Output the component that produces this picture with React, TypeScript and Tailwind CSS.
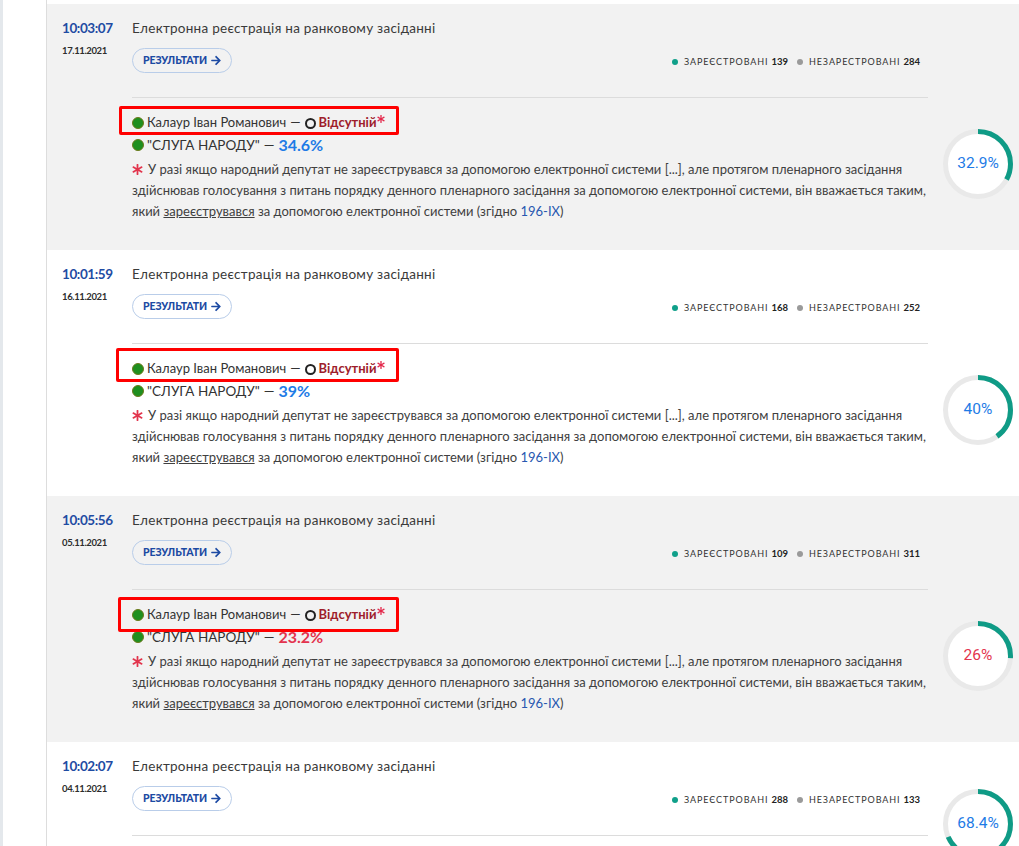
import React from "react";

interface Reg {
  time: string;
  date: string;
  reg: number;
  unreg: number;
  party: string;
  partyColor: "blue" | "red";
  circle: string;
  pct: number;
  box: { top: number; left: number; width: number; height: number };
  gray: boolean;
  circleTop: number;
}

const rows: Reg[] = [
  { time: "10:03:07", date: "17.11.2021", reg: 139, unreg: 284, party: "34.6%", partyColor: "blue", circle: "32.9%", pct: 32.9, box: { top: -6, left: -13, width: 280, height: 29 }, gray: true, circleTop: 125 },
  { time: "10:01:59", date: "16.11.2021", reg: 168, unreg: 252, party: "39%", partyColor: "blue", circle: "40%", pct: 40, box: { top: -10, left: -16, width: 283, height: 34 }, gray: false, circleTop: 125 },
  { time: "10:05:56", date: "05.11.2021", reg: 109, unreg: 311, party: "23.2%", partyColor: "red", circle: "26%", pct: 26, box: { top: -7, left: -14, width: 281, height: 35 }, gray: true, circleTop: 125 },
  { time: "10:02:07", date: "04.11.2021", reg: 288, unreg: 133, party: "", partyColor: "blue", circle: "68.4%", pct: 68.4, box: { top: 0, left: 0, width: 0, height: 0 }, gray: false, circleTop: 47 },
];

function ArrowIcon() {
  return (
    <svg viewBox="0 0 448 512" className="w-[10px] h-[11px] fill-current">
      <path d="M190.5 66.9l22.2-22.2c9.4-9.4 24.6-9.4 33.9 0L441 239c9.4 9.4 9.4 24.6 0 33.9L246.6 467.3c-9.4 9.4-24.6 9.4-33.9 0l-22.2-22.2c-9.5-9.5-9.3-25 .4-34.3L311.4 296H24c-13.3 0-24-10.7-24-24v-32c0-13.3 10.7-24 24-24h287.4L190.9 101.2c-9.8-9.3-10-24.8-.4-34.3z" />
    </svg>
  );
}

const ASTERISK =
  "M478.21 334.093L336 256l142.21-78.093c11.795-6.477 15.961-21.384 9.232-33.037l-19.48-33.741c-6.728-11.653-21.72-15.499-33.227-8.523L296 186.718l3.475-162.204C299.763 11.061 288.937 0 275.48 0h-38.96c-13.456 0-24.283 11.061-23.994 24.514L216 186.718 77.265 102.607c-11.506-6.976-26.499-3.13-33.227 8.523l-19.48 33.741c-6.728 11.653-2.562 26.56 9.233 33.037L176 256 33.79 334.093c-11.795 6.477-15.961 21.384-9.232 33.037l19.48 33.741c6.728 11.653 21.721 15.499 33.227 8.523L216 325.282l-3.475 162.204C212.237 500.939 223.064 512 236.52 512h38.961c13.456 0 24.283-11.061 23.995-24.514L296 325.282l138.735 84.111c11.506 6.976 26.499 3.13 33.227-8.523l19.48-33.741c6.728-11.653 2.563-26.559-9.232-33.036z";

function Asterisk() {
  return (
    <svg viewBox="0 0 512 512" className="inline-block w-[11px] h-[11px] fill-[#e2354d] align-[-1px] mr-[5px]">
      <path d={ASTERISK} />
    </svg>
  );
}

function Ring({ pct, label, color }: { pct: number; label: string; color: string }) {
  const r = 32.5;
  const c = 2 * Math.PI * r;
  return (
    <div className="relative w-[70px] h-[70px]">
      <svg width="70" height="70" viewBox="0 0 70 70">
        <circle cx="35" cy="35" r="31" fill="#ffffff" />
        <circle cx="35" cy="35" r={r} fill="none" stroke="#e9e9e9" strokeWidth="5" />
        <circle
          cx="35"
          cy="35"
          r={r}
          fill="none"
          stroke="#0f9b86"
          strokeWidth="5"
          strokeDasharray={`${(c * pct) / 100} ${c}`}
          transform="rotate(-90 35 35)"
        />
      </svg>
      <div className={`absolute inset-0 flex items-center justify-center text-[15.5px] font-['Roboto',sans-serif] ${color}`}>
        {label}
      </div>
    </div>
  );
}

function GreenDot() {
  return <span className="inline-block w-[12px] h-[12px] rounded-full bg-[#1f8f1f] border border-[#6b7a1a] mr-[3px] shrink-0" />;
}

function Row({ r }: { r: Reg }) {
  const pc = r.partyColor === "blue" ? "text-[#1e7be6]" : "text-[#e3344e]";
  return (
    <div className={`flex h-[246px] ${r.gray ? "bg-[#f2f2f2]" : "bg-white"}`}>
      <div className="w-[85px] pl-[15px] pt-[14px]">
        <div className="text-[13.5px] leading-[20px] font-bold tracking-[-0.03em] text-[#1f4ca3]">{r.time}</div>
        <div className="mt-[6px] text-[9.5px] leading-[14px] font-bold tracking-[-0.04em] text-[#2d2d2d]">{r.date}</div>
      </div>
      <div className="w-[796px] pt-[14px] text-[#333]">
        <div className="text-[13.5px] leading-[20px] tracking-[0.02em] text-[#3a3a3a]">
          Електронна реєстрація на ранковому засіданні
        </div>
        <div className="mt-[10px] flex items-center justify-between">
          <div className="h-[25px] w-[100px] justify-center rounded-full border border-[#b9cde9] flex items-center gap-[4px] text-[#1c4aa3] text-[10.5px] font-black tracking-[-0.01em]">
            РЕЗУЛЬТАТИ
            <ArrowIcon />
          </div>
          <div className="mt-[3px] mr-[8px] flex items-center text-[9px] tracking-[0.1em] text-[#333]">
            <span className="w-[6px] h-[6px] rounded-full bg-[#10a08a] mr-[6px]" />
            ЗАРЕЄСТРОВАНІ <b className="ml-[3px] tracking-normal text-[9.5px] text-[#222]">{r.reg}</b>
            <span className="w-[6px] h-[6px] rounded-full bg-[#9a9a9a] ml-[9px] mr-[6px]" />
            НЕЗАРЕСТРОВАНІ <b className="ml-[3px] tracking-normal text-[9.5px] text-[#222]">{r.unreg}</b>
          </div>
        </div>
        <div className="mt-[24px] border-t border-[#dcdcdc]" />
        {r.party && (
          <div className="mt-[14px] text-[13px]">
            <div className="relative h-[22px] flex items-center">
              <GreenDot />
              <span>Калаур Іван Романович</span>
              <span className="mx-[4px]">—</span>
              <span className="inline-block w-[11px] h-[11px] rounded-full border-2 border-[#222] mr-[3px]" />
              <b className="text-[#9e1d2b]">Відсутній</b>
              <svg viewBox="0 0 512 512" className="w-[8px] h-[8px] fill-[#e3274a] ml-[1px] mb-[8px]">
                <path d={ASTERISK} />
              </svg>
              <div
                className="absolute border-[3px] border-[#ff0000] rounded-[2px]"
                style={{ top: r.box.top, left: r.box.left, width: r.box.width, height: r.box.height }}
              />
            </div>
            <div className="h-[22px] flex items-center text-[13.5px]">
              <GreenDot />
              <span>"СЛУГА НАРОДУ"</span>
              <span className="mx-[4px]">—</span>
              <b className={`text-[16px] ${pc}`}>{r.party}</b>
            </div>
            <div className="mt-[3px] text-[13px] leading-[21px] text-[#404040]">
              <Asterisk />У разі якщо народний депутат не зареєструвався за допомогою електронної системи [...], але протягом пленарного засідання здійснював голосування з питань порядку денного пленарного засідання за допомогою електронної системи, він вважається таким, який <u>зареєструвався</u> за допомогою електронної системи (згідно <span className="text-[#2857b0]">196-IX</span>)
            </div>
          </div>
        )}
      </div>
      <div className="flex-1 pl-[15px]" style={{ paddingTop: r.circleTop }}>
        <Ring pct={r.pct} label={r.circle} color={r.partyColor === "blue" ? "text-[#1e7be6]" : "text-[#e3344e]"} />
      </div>
    </div>
  );
}

export default function App() {
  return (
    <div className="h-[846px] overflow-hidden bg-white font-['Lato',sans-serif]">
      <div className="flex h-full">
        <div className="w-[46px] border-l-[3px] border-[#e4e8ec]" />
        <div className="flex-1 border-l border-[#dddddd] pt-[4px]">
          {rows.map((r) => (
            <Row key={r.time} r={r} />
          ))}
        </div>
      </div>
    </div>
  );
}
